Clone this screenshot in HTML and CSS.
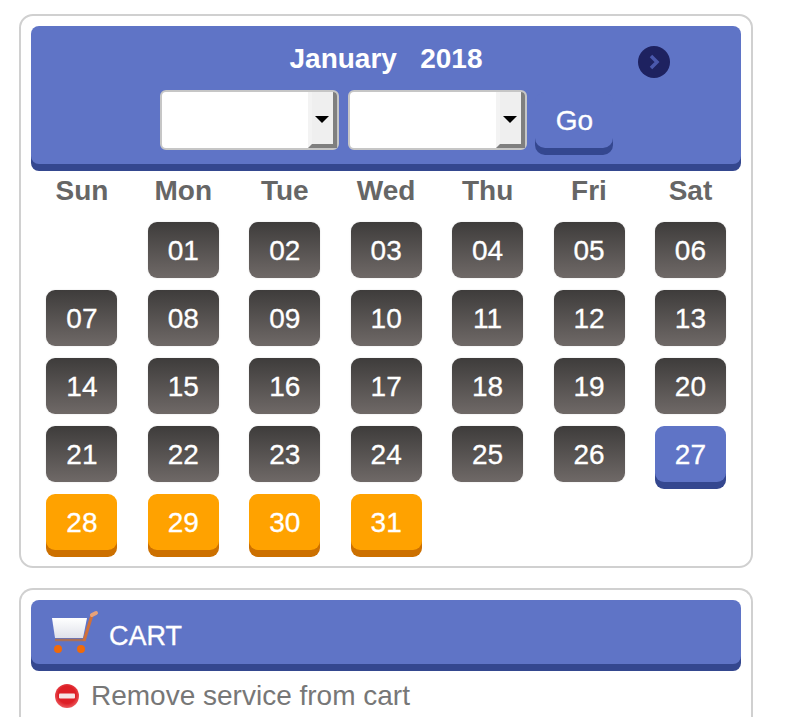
FILE: index.html
```html
<!DOCTYPE html>
<html lang="en">
<head>
    <meta charset="UTF-8">
    <meta name="viewport" content="width=device-width, initial-scale=1.0">
    <title>Booking Calendar</title>
    <link rel="stylesheet" href="styles.css">
</head>
<body>
    <!-- Calendar -->
    <div class="panel calendar">
        <div class="cal-head">
            <div class="cal-title">January &nbsp; 2018</div>
            <a class="cal-next" href="#">
                <svg width="32" height="32" viewBox="0 0 32 32">
                    <circle cx="16" cy="16" r="16" fill="#1e2260"/>
                    <path d="M13 10l6 6-6 6" fill="none" stroke="#4a58ac" stroke-width="3.5"/>
                </svg>
            </a>
            <div class="cal-form">
                <div class="pick"><span class="pick-arrow"></span></div>
                <div class="pick"><span class="pick-arrow"></span></div>
                <button class="go">Go</button>
            </div>
        </div>
        <div class="cal-grid">
            <div class="dow">Sun</div>
            <div class="dow">Mon</div>
            <div class="dow">Tue</div>
            <div class="dow">Wed</div>
            <div class="dow">Thu</div>
            <div class="dow">Fri</div>
            <div class="dow">Sat</div>

            <div class="day-empty"></div>
            <div class="day">01</div>
            <div class="day">02</div>
            <div class="day">03</div>
            <div class="day">04</div>
            <div class="day">05</div>
            <div class="day">06</div>

            <div class="day">07</div>
            <div class="day">08</div>
            <div class="day">09</div>
            <div class="day">10</div>
            <div class="day">11</div>
            <div class="day">12</div>
            <div class="day">13</div>

            <div class="day">14</div>
            <div class="day">15</div>
            <div class="day">16</div>
            <div class="day">17</div>
            <div class="day">18</div>
            <div class="day">19</div>
            <div class="day">20</div>

            <div class="day">21</div>
            <div class="day">22</div>
            <div class="day">23</div>
            <div class="day">24</div>
            <div class="day">25</div>
            <div class="day">26</div>
            <div class="day today">27</div>

            <div class="day open">28</div>
            <div class="day open">29</div>
            <div class="day open">30</div>
            <div class="day open">31</div>
        </div>
    </div>

    <!-- Cart -->
    <div class="panel cart">
        <div class="cart-head">
            <svg class="cart-icon" width="48" height="46" viewBox="0 0 48 46">
                <defs>
                    <linearGradient id="basket" x1="0" y1="0" x2="0" y2="1">
                        <stop offset="0" stop-color="#ffffff"/>
                        <stop offset="1" stop-color="#dfe1ea"/>
                    </linearGradient>
                </defs>
                <path d="M1 9H36L32 29H4Z" fill="url(#basket)"/>
                <path d="M4 31H33" fill="none" stroke="#a8705a" stroke-width="2.5"/>
                <path d="M33 32L41 6" fill="none" stroke="#d0703a" stroke-width="3"/>
                <path d="M41 6L45 4" fill="none" stroke="#e8a27a" stroke-width="4" stroke-linecap="round"/>
                <circle cx="7" cy="40" r="4" fill="#f06a0a"/>
                <circle cx="30" cy="40" r="4" fill="#f06a0a"/>
            </svg>
            <span class="cart-label">CART</span>
        </div>
        <div class="cart-row">
            <svg width="24" height="24" viewBox="0 0 24 24">
                <defs>
                    <radialGradient id="stop" cx="0.5" cy="0.45" r="0.6">
                        <stop offset="0.6" stop-color="#dd1f26"/>
                        <stop offset="1" stop-color="#f0686c"/>
                    </radialGradient>
                </defs>
                <circle cx="12" cy="12" r="12" fill="url(#stop)"/>
                <rect x="4" y="9.5" width="16" height="5" rx="1" fill="#f6e4e4"/>
            </svg>
            <span class="cart-text">Remove service from cart</span>
        </div>
    </div>
</body>
</html>
```

FILE: styles.css
```css
html, body {
    height: 717px;
    overflow: hidden;
}
body {
    font-family: "Liberation Sans", Arial, sans-serif;
    margin: 0;
    padding: 14px 0 0 19px;
    background-color: #fff;
}
.panel {
    box-sizing: border-box;
    width: 734px;
    border: 2px solid #d0d0d0;
    border-radius: 14px;
    padding: 10px;
    background-color: #fff;
}
.calendar {
    height: 554px;
    margin-bottom: 20px;
}
.cart {
    height: 129px;
    border-bottom: none;
    border-radius: 14px 14px 0 0;
}

/* Calendar header */
.cal-head {
    position: relative;
    height: 138px;
    background-color: #5f74c6;
    border-radius: 8px;
    box-shadow: 0 7px 0 #34478f;
    color: #fff;
}
.cal-title {
    font-size: 28px;
    font-weight: bold;
    line-height: 32px;
    padding-top: 17px;
    text-align: center;
}
.cal-next {
    position: absolute;
    top: 20px;
    left: 607px;
    height: 32px;
}
.cal-form {
    display: flex;
    justify-content: center;
    align-items: flex-start;
    margin-top: 15px;
}
.pick {
    box-sizing: border-box;
    position: relative;
    width: 179px;
    height: 60px;
    margin-right: 9px;
    background-color: #fff;
    border: 2px solid #c6c6c6;
    border-radius: 6px;
}
.pick-arrow {
    position: absolute;
    top: 0;
    right: 0;
    box-sizing: border-box;
    width: 29px;
    height: 56px;
    background-color: #efefef;
    border-right: 4px solid #7f7f7f;
    border-bottom: 4px solid #7f7f7f;
    border-left: 4px solid #f3f3f3;
    border-radius: 0 4px 0 0;
}
.pick-arrow::after {
    content: "";
    position: absolute;
    left: 3px;
    top: 24px;
    border-left: 7px solid transparent;
    border-right: 7px solid transparent;
    border-top: 7px solid #000;
}
.go {
    width: 78px;
    height: 56px;
    margin: 2px 0 0 -1px;
    padding: 2px 0 0 2px;
    border: none;
    border-radius: 10px;
    background-color: #5f74c6;
    box-shadow: 0 7px 0 #34478f;
    color: #fff;
    font-family: inherit;
    font-size: 28px;
    -webkit-text-stroke: 0.3px #fff;
    cursor: pointer;
}

/* Calendar grid */
.cal-grid {
    display: grid;
    grid-template-columns: repeat(7, 101.43px);
    grid-template-rows: 39px;
    grid-auto-rows: 56px;
    row-gap: 12px;
    justify-items: center;
    margin: 7px 0 0 0.2px;
}
.dow {
    font-size: 28px;
    font-weight: bold;
    line-height: 40px;
    color: #666;
}
.day {
    width: 71px;
    height: 56px;
    border-radius: 9px;
    background: linear-gradient(#3e3c3b, #6f6967);
    box-shadow: 0 0 2px rgba(0, 0, 0, 0.12);
    color: #fff;
    font-size: 28px;
    -webkit-text-stroke: 0.3px #fff;
    line-height: 58px;
    text-align: center;
}
.day.today {
    background: #5f74c6;
    box-shadow: 0 7px 0 #34478f;
}
.day.open {
    background: #ffa200;
    box-shadow: 0 7px 0 #cc7000;
}

/* Cart */
.cart-head {
    display: flex;
    align-items: center;
    height: 64px;
    background-color: #5f74c6;
    border-radius: 8px;
    box-shadow: 0 7px 0 #34478f;
    color: #fff;
    font-size: 27px;
}
.cart-icon {
    margin: 0 10px 0 20px;
}
.cart-label {
    padding-top: 8px;
    -webkit-text-stroke: 0.3px #fff;
}
.cart-row {
    display: flex;
    align-items: center;
    margin: 16px 0 0 24px;
    color: #777;
    font-size: 28px;
    line-height: 32px;
}
.cart-text {
    margin: 0 0 0 12px;
}
```
